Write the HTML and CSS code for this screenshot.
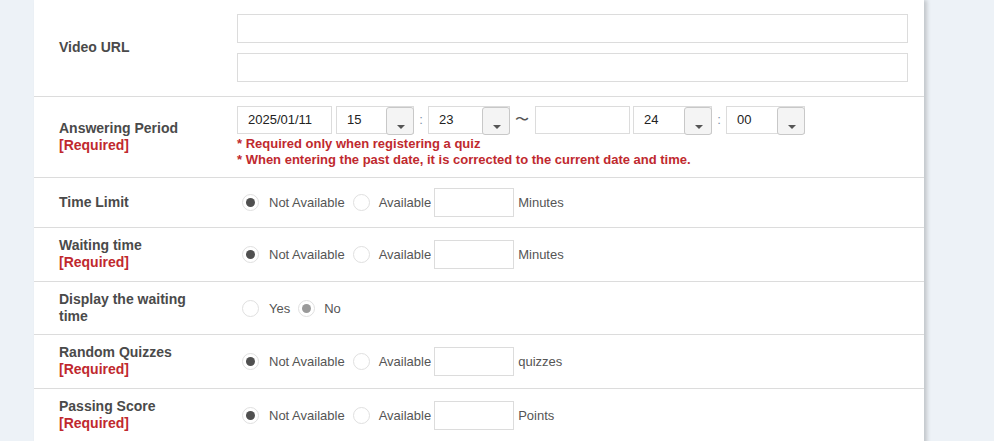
FILE: index.html
```html
<!DOCTYPE html>
<html>
<head>
<meta charset="utf-8">
<link rel="stylesheet" href="styles.css">
</head>
<body>
<div class="panel">
  <div class="row row-url">
    <div class="label">Video URL</div>
    <div class="value stack">
      <div class="input wide"></div>
      <div class="input wide"></div>
    </div>
  </div>
  <div class="row row-period">
    <div class="label">Answering Period<br><span class="req">[Required]</span></div>
    <div class="value stack tight">
      <div class="line">
        <div class="input date">2025/01/11</div>
        <div class="select s78"><span class="val">15</span><span class="btn"><span class="arrow"></span></span></div>
        <span class="colon">:</span>
        <div class="select s82"><span class="val">23</span><span class="btn"><span class="arrow"></span></span></div>
        <span class="tilde">〜</span>
        <div class="input date"></div>
        <div class="select s79 ml4"><span class="val">24</span><span class="btn"><span class="arrow"></span></span></div>
        <span class="colon">:</span>
        <div class="select s79"><span class="val">00</span><span class="btn"><span class="arrow"></span></span></div>
      </div>
      <div class="notes">
        <div>* Required only when registering a quiz</div>
        <div>* When entering the past date, it is corrected to the current date and time.</div>
      </div>
    </div>
  </div>
  <div class="row">
    <div class="label">Time Limit</div>
    <div class="value opts">
      <span class="radio on"></span><span class="opt">Not Available</span>
      <span class="radio"></span><span class="opt">Available</span>
      <div class="input num"></div><span class="unit">Minutes</span>
    </div>
  </div>
  <div class="row">
    <div class="label">Waiting time<br><span class="req">[Required]</span></div>
    <div class="value opts">
      <span class="radio on"></span><span class="opt">Not Available</span>
      <span class="radio"></span><span class="opt">Available</span>
      <div class="input num"></div><span class="unit">Minutes</span>
    </div>
  </div>
  <div class="row">
    <div class="label short">Display the waiting<br>time</div>
    <div class="value opts">
      <span class="radio"></span><span class="opt">Yes</span>
      <span class="radio on dim"></span><span class="opt">No</span>
    </div>
  </div>
  <div class="row">
    <div class="label">Random Quizzes<br><span class="req">[Required]</span></div>
    <div class="value opts">
      <span class="radio on"></span><span class="opt">Not Available</span>
      <span class="radio"></span><span class="opt">Available</span>
      <div class="input num"></div><span class="unit">quizzes</span>
    </div>
  </div>
  <div class="row">
    <div class="label">Passing Score<br><span class="req">[Required]</span></div>
    <div class="value opts">
      <span class="radio on"></span><span class="opt">Not Available</span>
      <span class="radio"></span><span class="opt">Available</span>
      <div class="input num"></div><span class="unit">Points</span>
    </div>
  </div>
</div>
</body>
</html>
```

FILE: styles.css
```css
html, body {
  margin: 0;
  padding: 0;
  background: #edf2f7;
  font-family: "Liberation Sans", Arial, sans-serif;
  color: #555;
}
.panel {
  margin-left: 34px;
  width: 890px;
  background: #fff;
  box-shadow: 3px 0 4px rgba(0, 0, 0, 0.18);
  min-height: 470px;
}
.row {
  display: flex;
  align-items: center;
  border-bottom: 1px solid #dcdcdc;
}
.label {
  width: 178px;
  padding: 9px 0 10px 25px;
  font-size: 14px;
  line-height: 17px;
  font-weight: bold;
  color: #4a4a4a;
}
.label.short {
  padding-bottom: 9px;
}
.req {
  color: #c0292e;
}
.value {
  flex: 1;
  padding: 10px 16px 10px 0;
  font-size: 13px;
}
.stack {
  display: flex;
  flex-direction: column;
  gap: 10px;
}
.row-url .value {
  padding-top: 14px;
  padding-bottom: 14px;
}
.row-period .value {
  padding-top: 9px;
  padding-bottom: 9px;
}
.stack.tight {
  gap: 0;
}
.input {
  box-sizing: border-box;
  height: 29px;
  border: 1px solid #dcdcdc;
  background: #fff;
  font-size: 13px;
  line-height: 27px;
  color: #222;
  padding: 0 10px;
}
.input.wide {
  width: 671px;
}
.line {
  display: flex;
  align-items: flex-start;
}
.input.date {
  width: 95px;
  height: 28px;
  line-height: 26px;
  margin-right: 4px;
}
.select {
  position: relative;
  box-sizing: border-box;
  height: 28px;
  border: 1px solid #dcdcdc;
  font-size: 13px;
  line-height: 26px;
  color: #222;
}
.s78 { width: 78px; }
.s82 { width: 82px; }
.s79 { width: 79px; }
.ml4 { margin-left: -1px; }
.val {
  padding-left: 10px;
}
.btn {
  position: absolute;
  right: -1px;
  top: 0;
  width: 28px;
  height: 28px;
  box-sizing: border-box;
  border: 1px solid #c8c8c8;
  border-radius: 3px;
  background: #f4f4f4;
}
.arrow {
  position: absolute;
  left: 10px;
  bottom: 5px;
  width: 0;
  height: 0;
  border-left: 4px solid transparent;
  border-right: 4px solid transparent;
  border-top: 4px solid #555;
}
.colon {
  width: 14px;
  text-align: center;
  font-size: 13px;
  line-height: 28px;
  color: #7d93a8;
}
.tilde {
  width: 25px;
  padding-right: 2px;
  box-sizing: border-box;
  text-align: center;
  font-size: 14px;
  line-height: 26px;
  color: #555;
}
.notes {
  margin-top: 2px;
  font-size: 13px;
  font-weight: bold;
  line-height: 16px;
  color: #c0292e;
}
.opts {
  display: flex;
  align-items: center;
}
.radio {
  box-sizing: border-box;
  width: 17px;
  height: 17px;
  border: 1px solid #e0e0e0;
  border-radius: 50%;
  background: #fff;
  margin-left: 5px;
  margin-right: 10px;
  position: relative;
}
.opt + .radio {
  margin-left: 8px;
  margin-right: 9px;
}
.radio.on::after {
  content: "";
  position: absolute;
  left: 3px;
  top: 3px;
  width: 9px;
  height: 9px;
  border-radius: 50%;
  background: #505050;
}
.radio.dim::after {
  background: #9a9a9a;
}
.opt {
  color: #555;
}
.input.num {
  width: 80px;
  margin-left: 3px;
  margin-right: 4px;
}
.unit {
  color: #555;
}
```
